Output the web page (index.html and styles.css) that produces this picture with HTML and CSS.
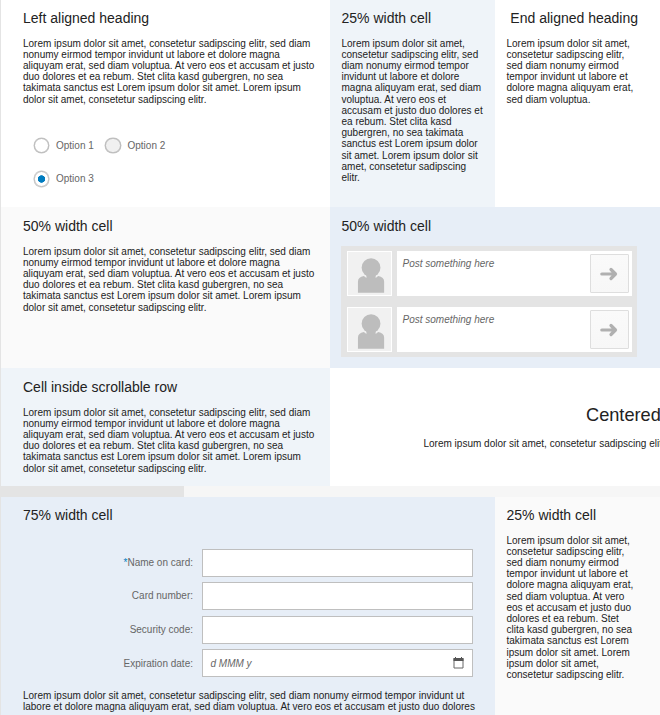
FILE: index.html
```
<!DOCTYPE html>
<html lang="en">
<head>
<meta charset="utf-8">
<title>Grid layout</title>
<link rel="stylesheet" href="styles.css">
</head>
<body>
<svg class="defs" width="0" height="0">
  <symbol id="person" viewBox="0 0 42 42">
    <circle cx="22.500" cy="15.300" r="9.200"/>
    <path d="M9.700 39.800V29Q9.700 24.500 15.500 23.500L18 25.500V22H27V25.500L29.500 23.500Q35.300 24.500 35.300 29V39.800Z"/>
  </symbol>
  <symbol id="arrow" viewBox="0 0 18 14">
    <path d="M1.800 7H15M11 2.500L15.500 7L11 11.500" fill="none" stroke="#b0b0b0" stroke-width="3.200" stroke-linecap="round" stroke-linejoin="round"/>
  </symbol>
</svg>
<main class="page">
  <section class="row row-top">
    <div class="cell half white">
      <h2>Left aligned heading</h2>
      <p>Lorem ipsum dolor sit amet, consetetur sadipscing elitr, sed diam<br>nonumy eirmod tempor invidunt ut labore et dolore magna<br>aliquyam erat, sed diam voluptua. At vero eos et accusam et justo<br>duo dolores et ea rebum. Stet clita kasd gubergren, no sea<br>takimata sanctus est Lorem ipsum dolor sit amet. Lorem ipsum<br>dolor sit amet, consetetur sadipscing elitr.</p>
      <div class="options">
        <div class="option"><span class="radio"></span>Option 1</div>
        <div class="option"><span class="radio disabled"></span>Option 2</div>
        <div class="option"><span class="radio checked"></span>Option 3</div>
      </div>
    </div>
    <div class="cell quarter pale">
      <h2>25% width cell</h2>
      <p>Lorem ipsum dolor sit amet,<br>consetetur sadipscing elitr, sed<br>diam nonumy eirmod tempor<br>invidunt ut labore et dolore<br>magna aliquyam erat, sed diam<br>voluptua. At vero eos et<br>accusam et justo duo dolores et<br>ea rebum. Stet clita kasd<br>gubergren, no sea takimata<br>sanctus est Lorem ipsum dolor<br>sit amet. Lorem ipsum dolor sit<br>amet, consetetur sadipscing<br>elitr.</p>
    </div>
    <div class="cell quarter white end">
      <h2>End aligned heading</h2>
      <p>Lorem ipsum dolor sit amet,<br>consetetur sadipscing elitr,<br>sed diam nonumy eirmod<br>tempor invidunt ut labore et<br>dolore magna aliquyam erat,<br>sed diam voluptua.</p>
    </div>
  </section>
  <section class="row row-feed">
    <div class="cell half gray">
      <h2>50% width cell</h2>
      <p>Lorem ipsum dolor sit amet, consetetur sadipscing elitr, sed diam<br>nonumy eirmod tempor invidunt ut labore et dolore magna<br>aliquyam erat, sed diam voluptua. At vero eos et accusam et justo<br>duo dolores et ea rebum. Stet clita kasd gubergren, no sea<br>takimata sanctus est Lorem ipsum dolor sit amet. Lorem ipsum<br>dolor sit amet, consetetur sadipscing elitr.</p>
    </div>
    <div class="cell half blue inner">
      <h2>50% width cell</h2>
      <div class="feed">
        <div class="post">
          <svg class="avatar"><use href="#person"/></svg>
          <div class="post-box"><span>Post something here</span><div class="send"><svg width="18" height="14"><use href="#arrow"/></svg></div></div>
        </div>
        <div class="post">
          <svg class="avatar"><use href="#person"/></svg>
          <div class="post-box"><span>Post something here</span><div class="send"><svg width="18" height="14"><use href="#arrow"/></svg></div></div>
        </div>
      </div>
    </div>
  </section>
  <section class="row row-scroll">
    <div class="cell half pale">
      <h2>Cell inside scrollable row</h2>
      <p>Lorem ipsum dolor sit amet, consetetur sadipscing elitr, sed diam<br>nonumy eirmod tempor invidunt ut labore et dolore magna<br>aliquyam erat, sed diam voluptua. At vero eos et accusam et justo<br>duo dolores et ea rebum. Stet clita kasd gubergren, no sea<br>takimata sanctus est Lorem ipsum dolor sit amet. Lorem ipsum<br>dolor sit amet, consetetur sadipscing elitr.</p>
    </div>
    <div class="cell half white centered">
      <h1>Centered</h1>
      <p>Lorem ipsum dolor sit amet, consetetur sadipscing elitr</p>
    </div>
  </section>
  <div class="scrollbar"><div class="thumb"></div></div>
  <section class="row row-form">
    <div class="cell wide blue">
      <h2>75% width cell</h2>
      <div class="form">
        <label><span><i class="required">*</i>Name on card:</span></label><div class="field"></div>
        <label>Card number:</label><div class="field"></div>
        <label>Security code:</label><div class="field"></div>
        <label>Expiration date:</label>
        <div class="field date">d MMM y
          <svg width="11" height="12" viewBox="0 0 11 12"><path d="M1 1.500H10V11H1Z" fill="#fff" stroke="#666"/><path d="M.5 1H10.500V4H.5Z" fill="#555"/><path d="M2.500 0V2M8.500 0V2" stroke="#555"/></svg>
        </div>
      </div>
      <p>Lorem ipsum dolor sit amet, consetetur sadipscing elitr, sed diam nonumy eirmod tempor invidunt ut<br>labore et dolore magna aliquyam erat, sed diam voluptua. At vero eos et accusam et justo duo dolores</p>
    </div>
    <div class="cell quarter gray">
      <h2>25% width cell</h2>
      <p>Lorem ipsum dolor sit amet,<br>consetetur sadipscing elitr,<br>sed diam nonumy eirmod<br>tempor invidunt ut labore et<br>dolore magna aliquyam erat,<br>sed diam voluptua. At vero<br>eos et accusam et justo duo<br>dolores et ea rebum. Stet<br>clita kasd gubergren, no sea<br>takimata sanctus est Lorem<br>ipsum dolor sit amet. Lorem<br>ipsum dolor sit amet,<br>consetetur sadipscing elitr.</p>
    </div>
  </section>
</main>
</body>
</html>
```
FILE: styles.css
```
* { box-sizing: border-box; }
body {
  margin: 0;
  overflow: hidden;
  font: 10px/11.2px "Liberation Sans", Arial, sans-serif;
  color: #222;
}
.defs { display: block; height: 0; }
.page {
  width: 660px;
  height: 715px;
  overflow: hidden;
  border-left: 1px solid #e4e4e4;
}
.row { display: flex; overflow: hidden; }
.row-top { height: 207px; }
.row-feed { height: 161px; }
.row-scroll { height: 117.500px; }
.row-form { height: 218px; }
.cell {
  padding: 11px 11px 0 11.500px;
  overflow: hidden;
  white-space: nowrap;
  flex: none;
}
.row-top .cell, .row-form .cell { padding-top: 10px; }
.cell:first-child { padding-left: 22px; }
.half { width: 330px; }
.half:first-child { width: 329px; }
.quarter { width: 165px; }
.wide { width: 494px; }
.white { background: #fff; }
.pale { background: #eff4f9; }
.gray { background: #fafafa; }
.blue { background: #e7eef7; }
h2 {
  margin: 0 0 10.500px;
  font-size: 14px;
  line-height: 17px;
  font-weight: 400;
  color: #222;
}
p { margin: 0; }
.end h2 { text-align: right; margin-right: 11px; }
.options {
  display: grid;
  grid-template-columns: 71.500px auto;
  grid-auto-rows: 33.500px;
  align-items: center;
  margin: 24px 0 0 10.500px;
}
.option { display: flex; align-items: center; gap: 7px; color: #666; }
.radio {
  width: 15.500px;
  height: 15.500px;
  border: 1.500px solid #b8b8b8;
  border-radius: 50%;
  background: #fff;
  box-shadow: 0 0 0 .5px #c8c8c8;
}
.radio.disabled { background: #f0f0f0; }
.radio.checked { background: radial-gradient(circle, #007cc0 3.400px, #fff 4px); }
.feed {
  display: flex;
  flex-direction: column;
  gap: 11px;
  width: 296px;
  height: 111.500px;
  margin-left: -.5px;
  padding: 5.500px;
  background: #e4e4e4;
}
.inner h2 { margin-bottom: 10.500px; }
.post { display: flex; gap: 5px; height: 45px; }
.avatar {
  width: 45px;
  height: 45px;
  border: 1.500px solid #fff;
  background: #f1f1f1;
  fill: #bdbdbd;
}
.post-box {
  display: flex;
  justify-content: space-between;
  flex: 1;
  padding: 3px 2.500px 3px 6px;
  background: #fff;
  font-style: italic;
  color: #666;
}
.post-box span { padding-top: 4px; }
.send {
  display: flex;
  align-items: center;
  justify-content: center;
  width: 39.500px;
  height: 39px;
  border: 1px solid #dedede;
  border-radius: 1px;
  background: linear-gradient(#fafafa, #f7f7f7);
}
.row-scroll .centered { padding: 36px 0 0; }
h1 {
  margin: 0 0 12px 256px;
  font-size: 18.200px;
  line-height: 22px;
  font-weight: 400;
}
.centered p { margin-left: 93.500px; }
.scrollbar { height: 11.500px; background: #f6f6f6; }
.thumb { width: 183px; height: 100%; background: #e4e4e4; }
.form {
  display: grid;
  grid-template-columns: 170px 271.500px;
  grid-auto-rows: 28px;
  row-gap: 5.600px;
  column-gap: 8.500px;
  align-items: center;
  margin: 24.500px 0 13px;
}
label { text-align: right; color: #666; }
.required { color: #007cc0; font-size: 10px; line-height: 8px; font-style: normal; }
.field { height: 28px; border: 1px solid #bfbfbf; background: #fff; }
.date {
  display: flex;
  align-items: center;
  justify-content: space-between;
  padding: 0 8px;
  font-style: italic;
  color: #666;
}
```
